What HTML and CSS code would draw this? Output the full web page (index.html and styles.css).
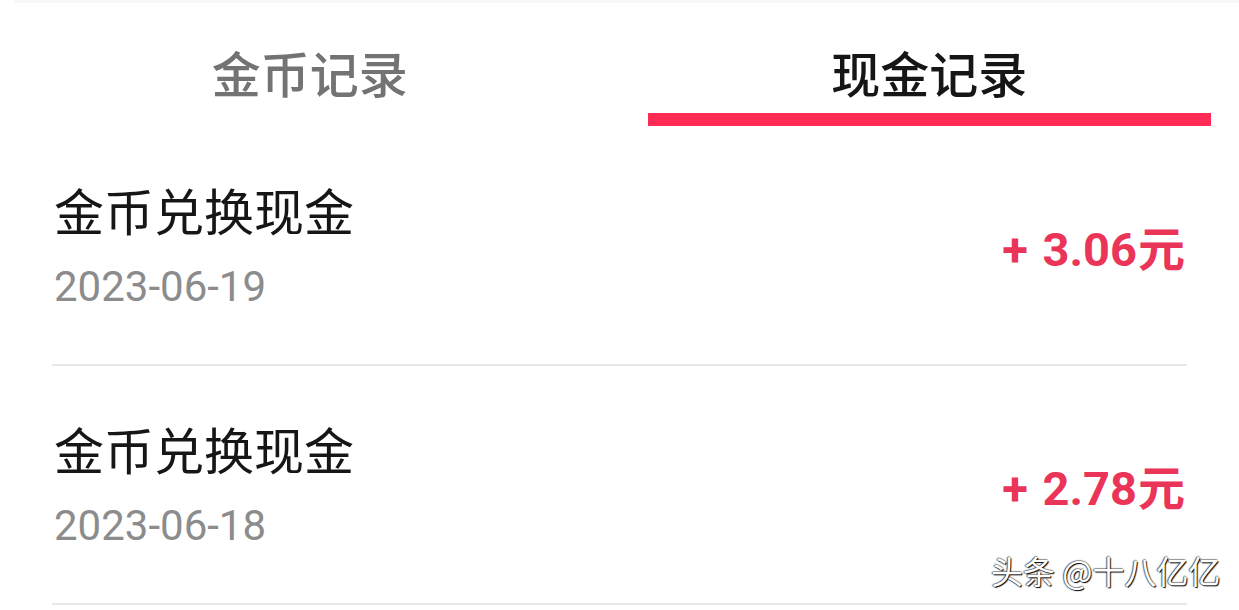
FILE: index.html
```html
<!DOCTYPE html>
<html lang="zh-CN">
<head>
<meta charset="utf-8">
<title>现金记录</title>
<link rel="stylesheet" href="styles.css">
</head>
<body>
<div class="page">
  <div class="topline"></div>
  <div class="tabs">
    <div class="tab"><span class="tab-label">金币记录</span></div>
    <div class="tab active"><span class="tab-label">现金记录</span><span class="tab-bar"></span></div>
  </div>
  <ul class="records">
    <li class="record">
      <div class="info">
        <div class="title">金币兑换现金</div>
        <div class="date">2023-06-19</div>
      </div>
      <div class="amount">+ 3.06<span class="unit">元</span></div>
    </li>
    <li class="record">
      <div class="info">
        <div class="title">金币兑换现金</div>
        <div class="date">2023-06-18</div>
      </div>
      <div class="amount">+ 2.78<span class="unit">元</span></div>
    </li>
  </ul>
  <div class="watermark">头条 @十八亿亿</div>
</div>
</body>
</html>
```

FILE: styles.css
```css
* { box-sizing: border-box; }
html, body {
  margin: 0;
  padding: 0;
  background: #ffffff;
}
body {
  font-family: Roboto, "Noto Sans CJK SC", "Noto Sans", sans-serif;
  width: 1239px;
  height: 610px;
  overflow: hidden;
}
.page {
  position: relative;
  width: 1239px;
  height: 610px;
}
.topline {
  height: 3px;
  margin-left: 14px;
  background: #f7f7f7;
}
.tabs {
  display: flex;
  height: 124px;
}
.tab {
  flex: 1;
  display: flex;
  flex-direction: column;
  align-items: center;
  padding: 0 28px;
}
.tab-label {
  font-family: "Noto Sans CJK SC", sans-serif;
  font-size: 49px;
  line-height: 49px;
  margin-top: 44px;
  color: #737373;
  font-weight: 500;
}
.tab.active .tab-label {
  color: #161616;
}
.tab-bar {
  display: block;
  align-self: stretch;
  height: 13px;
  margin-top: 17px;
  background: #fe2c55;
}
.records {
  list-style: none;
  margin: 0;
  padding: 0 52px;
}
.record {
  display: flex;
  align-items: center;
  justify-content: space-between;
  height: 239px;
  border-bottom: 2px solid #e8e8e8;
  padding: 0 2px 0 2px;
}
.info {
  display: flex;
  flex-direction: column;
}
.title {
  font-family: "Noto Sans CJK SC", sans-serif;
  font-size: 50px;
  line-height: 56px;
  color: #161616;
}
.date {
  font-family: Roboto, sans-serif;
  font-size: 42px;
  line-height: 48px;
  margin-top: 26px;
  color: #8c8c8c;
}
.amount {
  font-family: Roboto, sans-serif;
  font-weight: 700;
  font-size: 47px;
  color: #ea3559;
  line-height: 50px;
  margin-top: 4px;
  word-spacing: 3px;
}
.unit {
  font-family: "Noto Sans CJK SC", sans-serif;
  font-weight: 700;
  margin-left: 1px;
}
.watermark {
  position: absolute;
  left: 991px;
  top: 550px;
  font-family: "Noto Sans CJK SC", sans-serif;
  font-size: 32px;
  line-height: 40px;
  color: #ffffff;
  text-shadow: 1px 1px 1px #000, -1px 0 1px rgba(0,0,0,0.6), 0 -1px 1px rgba(0,0,0,0.4);
  white-space: nowrap;
}
```
